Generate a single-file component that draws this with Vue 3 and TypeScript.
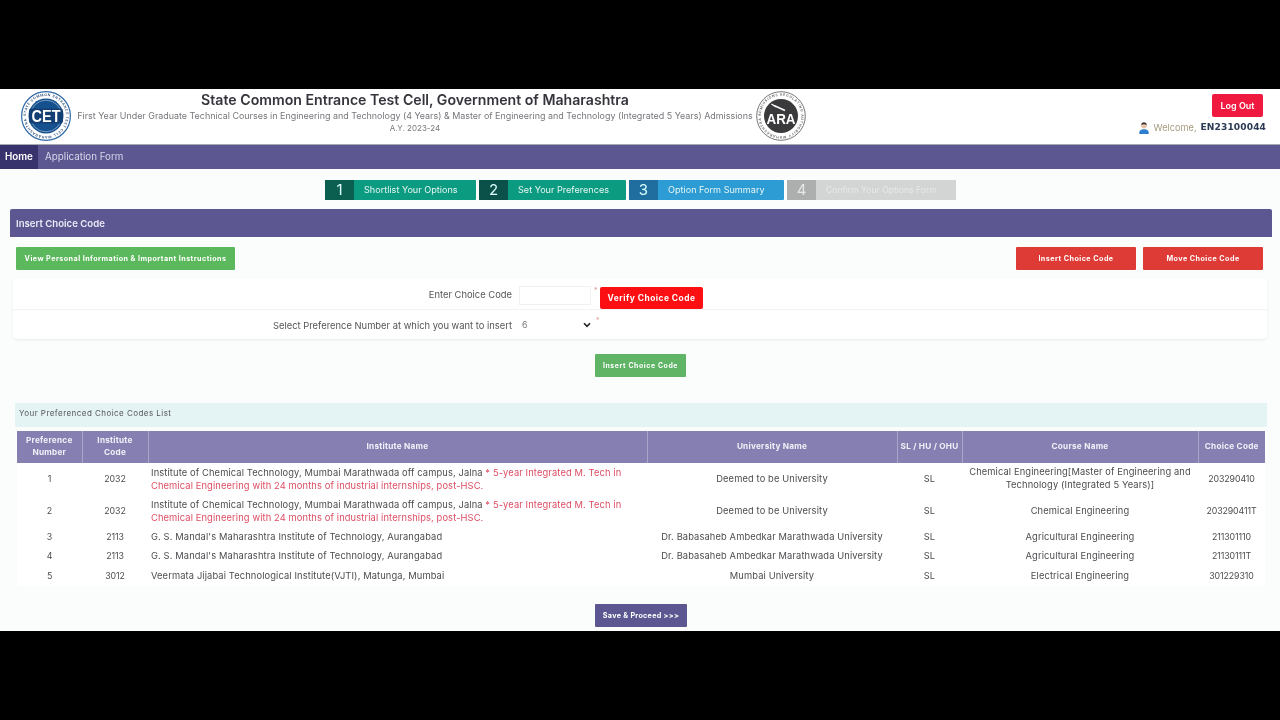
<script setup lang="ts">
interface Step {
  num: number
  label: string
  kind: string
}

interface Row {
  pref: number
  code: number
  institute: string
  note?: string
  university: string
  seat: string
  course: string
  choice: string
}

const steps: Step[] = [
  { num: 1, label: 'Shortlist Your Options', kind: 'green' },
  { num: 2, label: 'Set Your Preferences', kind: 'green two' },
  { num: 3, label: 'Option Form Summary', kind: 'blue' },
  { num: 4, label: 'Confirm Your Options Form', kind: 'grey' }
]

const ict = 'Institute of Chemical Technology, Mumbai Marathwada off campus, Jalna'
const ictNote = '* 5-year Integrated M. Tech  in Chemical Engineering with 24 months of industrial internships, post-HSC.'
const gsm = "G. S. Mandal's Maharashtra Institute of Technology, Aurangabad"
const bamu = 'Dr. Babasaheb Ambedkar Marathwada University'

const rows: Row[] = [
  { pref: 1, code: 2032, institute: ict, note: ictNote, university: 'Deemed to be University', seat: 'SL', course: 'Chemical Engineering[Master of Engineering and Technology (Integrated 5 Years)]', choice: '203290410' },
  { pref: 2, code: 2032, institute: ict, note: ictNote, university: 'Deemed to be University', seat: 'SL', course: 'Chemical Engineering', choice: '203290411T' },
  { pref: 3, code: 2113, institute: gsm, university: bamu, seat: 'SL', course: 'Agricultural Engineering', choice: '211301110' },
  { pref: 4, code: 2113, institute: gsm, university: bamu, seat: 'SL', course: 'Agricultural Engineering', choice: '21130111T' },
  { pref: 5, code: 3012, institute: 'Veermata Jijabai Technological Institute(VJTI), Matunga, Mumbai', university: 'Mumbai University', seat: 'SL', course: 'Electrical Engineering', choice: '301229310' }
]
</script>

<template>
  <div class="page">
    <header class="top">
      <svg class="logo cet" viewBox="0 0 50 50">
        <circle cx="25" cy="25" r="24.4" fill="#fff" stroke="#2f6aa8" stroke-width="1.2" />
        <defs>
          <path id="cetRing" d="M25 25 m-20 0 a20 20 0 1 1 40 0 a20 20 0 1 1 -40 0" />
        </defs>
        <text class="ring" fill="#30507c"><textPath href="#cetRing" textLength="122">STATE COMMON ENTRANCE TEST CELL MAHARASHTRA</textPath></text>
        <circle cx="25" cy="25" r="17.5" fill="#16518f" />
        <circle cx="25" cy="25" r="15.8" fill="none" stroke="#d7e4f0" stroke-width="0.5" />
        <rect x="8" y="17.5" width="34" height="15" rx="3" fill="#123f73" />
        <text x="25" y="31" text-anchor="middle" class="cet-text" textLength="29" lengthAdjust="spacingAndGlyphs">CET</text>
      </svg>
      <div class="title">
        <h1>State Common Entrance Test Cell, Government of Maharashtra</h1>
        <p>First Year Under Graduate Technical Courses in Engineering and Technology (4 Years) &amp; Master of Engineering and Technology (Integrated 5 Years) Admissions</p>
        <p class="ay">A.Y. 2023-24</p>
      </div>
      <svg class="logo ara" viewBox="0 0 50 50">
        <circle cx="25" cy="25" r="24.3" fill="#fff" stroke="#666" stroke-width="0.9" />
        <defs>
          <path id="araRing" d="M25 25 m-20.2 0 a20.2 20.2 0 1 1 40.4 0 a20.2 20.2 0 1 1 -40.4 0" />
        </defs>
        <text class="ring" fill="#666"><textPath href="#araRing" textLength="124">ADMISSIONS REGULATING AUTHORITY MAHARASHTRA</textPath></text>
        <circle cx="25" cy="25" r="17" fill="#3a3a3c" />
        <path d="M15.5 13 L20 16 M18 14.5 L29 19.5" stroke="#fff" stroke-width="1.4" fill="none" />
        <text x="25" y="33" text-anchor="middle" class="ara-text" textLength="29" lengthAdjust="spacingAndGlyphs">ARA</text>
      </svg>
      <div class="user">
        <button class="logout" type="button">Log Out</button>
        <div class="welcome">
          <svg class="avatar" viewBox="0 0 14 15">
            <path d="M1.5 14.5 C1 10.5 3.5 9 7 9 C10.5 9 13 10.5 12.5 14.5 Z" fill="#2f7fd0" />
            <circle cx="7" cy="5" r="3.2" fill="#e8c4a8" />
            <path d="M3.7 4.6 C3.6 1.5 5.5 .8 7 .8 C8.5 .8 10.4 1.5 10.3 4.6 C9.5 3.4 8 3.2 7 3.2 C6 3.2 4.5 3.4 3.7 4.6 Z" fill="#33302e" />
          </svg>
          <span class="hello">Welcome,</span>
          <b>EN23100044</b>
        </div>
      </div>
    </header>

    <nav class="menu">
      <a class="home">Home</a>
      <a>Application Form</a>
    </nav>

    <section class="steps">
      <div v-for="s in steps" :key="s.num" class="step" :class="s.kind">
        <span class="num">{{ s.num }}</span>
        <span class="lbl">{{ s.label }}</span>
      </div>
    </section>

    <main class="panel">
      <h2 class="panel-head">Insert Choice Code</h2>

      <div class="actions">
        <button class="btn success wide" type="button">View Personal Information &amp; Important Instructions</button>
        <div class="right">
          <button class="btn danger" type="button">Insert Choice Code</button>
          <button class="btn danger" type="button">Move Choice Code</button>
        </div>
      </div>

      <div class="form-card">
        <div class="form-row first">
          <label>Enter Choice Code</label>
          <input class="code-input" type="text" />
          <span class="req">*</span>
          <button class="btn verify" type="button">Verify Choice Code</button>
        </div>
        <div class="form-row second">
          <label>Select Preference Number at which you want to insert</label>
          <div class="select-wrap">
            <select class="pref-select">
              <option>6</option>
            </select>
            <svg class="chevron" viewBox="0 0 8 6">
              <path d="M1 1.2 L4 4.4 L7 1.2" fill="none" stroke="#222" stroke-width="1.6" />
            </svg>
          </div>
          <span class="req">*</span>
        </div>
      </div>

      <div class="center">
        <button class="btn success insert" type="button">Insert Choice Code</button>
      </div>

      <div class="list-head">Your Preferenced Choice Codes List</div>

      <table class="codes">
        <colgroup>
          <col class="c65" />
          <col class="c66" />
          <col class="c499" />
          <col class="c250" />
          <col class="c65" />
          <col class="c236" />
          <col class="c67" />
        </colgroup>
        <thead>
          <tr>
            <th>Preference Number</th>
            <th>Institute Code</th>
            <th>Institute Name</th>
            <th>University Name</th>
            <th class="tight">SL / HU / OHU</th>
            <th>Course Name</th>
            <th class="tight">Choice Code</th>
          </tr>
        </thead>
        <tbody>
          <tr v-for="r in rows" :key="r.pref" :class="{ tall: r.note }">
            <td class="num-cell">{{ r.pref }}</td>
            <td class="num-cell">{{ r.code }}</td>
            <td class="left">{{ r.institute }} <span v-if="r.note" class="note">{{ r.note }}</span></td>
            <td>{{ r.university }}</td>
            <td>{{ r.seat }}</td>
            <td>{{ r.course }}</td>
            <td class="num-cell">{{ r.choice }}</td>
          </tr>
        </tbody>
      </table>

      <div class="center save-wrap">
        <button class="btn save" type="button">Save &amp; Proceed &gt;&gt;&gt;</button>
      </div>
    </main>
  </div>
</template>

<style scoped>
.page {
  height: 542px;
  margin-top: 89px;
  background: #fbfcfc;
  font-family: Inter, "Open Sans", sans-serif;
  color: #444;
  overflow: hidden;
  filter: blur(0.4px);
}

.top {
  display: flex;
  align-items: flex-start;
  height: 56px;
  padding: 2px 14px 0 21px;
  background: #fff;
  border-bottom: 1px solid #a9a9b0;
  box-sizing: border-box;
}

.logo {
  width: 50px;
  height: 50px;
  flex: 0 0 auto;
}

.ring {
  font-family: Inter, sans-serif;
  font-size: 3.5px;
  font-weight: 600;
}

.cet-text {
  font-family: "Liberation Sans", sans-serif;
  font-size: 17px;
  font-weight: 700;
  fill: #fff;
}

.ara-text {
  font-family: "Liberation Sans", sans-serif;
  font-size: 15px;
  font-weight: 700;
  fill: #fff;
}

.title {
  width: 676px;
  margin: 0 3px 0 6px;
  text-align: center;
}

.title h1 {
  margin: 1px 0 0;
  font-size: 14.13px;
  line-height: 16px;
  font-weight: 600;
  color: #34343c;
  white-space: nowrap;
}

.title p {
  margin: 0;
  padding-top: 2px;
  font-size: 8.93px;
  line-height: 11px;
  color: #77777c;
  white-space: nowrap;
}

.title .ay {
  padding-top: 2px;
  font-size: 8px;
}

.user {
  margin-left: auto;
  display: flex;
  flex-direction: column;
  align-items: flex-end;
}

.logout {
  width: 51px;
  height: 23px;
  margin: 3px 3px 0 0;
  border: 0;
  border-radius: 2px;
  background: #f0193f;
  color: #fff;
  font: 600 9px Inter, sans-serif;
}

.welcome {
  display: flex;
  align-items: center;
  margin-top: 3px;
  font-size: 10px;
  line-height: 15px;
}

.avatar {
  width: 12px;
  height: 14px;
  margin-right: 4px;
}

.hello {
  color: #a89a80;
  font-size: 9.2px;
}

.welcome b {
  margin-left: 4px;
  color: #2c3a55;
  font-family: "DejaVu Sans", sans-serif;
  font-size: 9.1px;
  letter-spacing: 0.1px;
}

.menu {
  display: flex;
  height: 24px;
  background: #5d5791;
  font-size: 9.8px;
  line-height: 24px;
  color: #d9d7ea;
}

.menu a {
  padding: 0 7px;
}

.menu .home {
  width: 38px;
  padding: 0 0 0 5px;
  box-sizing: border-box;
  background: #38336c;
  color: #fff;
  font-weight: 600;
}

.steps {
  display: flex;
  justify-content: center;
  gap: 3px;
  margin-top: 11px;
  padding-left: 1px;
}

.step {
  display: flex;
  height: 20px;
  border-radius: 1px;
  background: #0b9b80;
  color: #e6f6f2;
  font-size: 9.1px;
  line-height: 20px;
}

.step:nth-child(1) { width: 151px; }
.step:nth-child(2) { width: 147px; }
.step:nth-child(3) { width: 155px; }
.step:nth-child(4) { width: 169px; }

.num {
  width: 29px;
  flex: 0 0 auto;
  background: #0a5f50;
  color: #dff;
  font-size: 15px;
  text-align: center;
}

.lbl {
  flex: 1;
  padding-left: 10px;
  white-space: nowrap;
}

.step.two .num {
  background: #0b5049;
}

.step.blue {
  background: #2d9bd4;
}

.step.blue .num {
  background: #1f6e9f;
}

.step.grey {
  background: #d3d4d4;
  color: #e8e8e8;
  font-size: 8.6px;
}

.step.grey .num {
  background: #adaeae;
  color: #e8e8e8;
}

.panel {
  padding: 9px 8px 0 10px;
}

.panel-head {
  height: 28px;
  margin: 0;
  padding-left: 6px;
  border-radius: 2px 2px 0 0;
  background: #5d5791;
  color: #eceaf6;
  font-size: 9.6px;
  line-height: 29px;
  font-weight: 600;
}

.actions {
  display: flex;
  justify-content: space-between;
  margin-top: 10px;
  padding: 0 9px 0 6px;
}

.right {
  display: flex;
  gap: 7px;
}

.btn {
  height: 23px;
  border: 0;
  border-radius: 1px;
  color: #fff;
  font-family: Inter, sans-serif;
  font-size: 7.2px;
  font-weight: 700;
  letter-spacing: 0.45px;
  padding: 0;
  white-space: nowrap;
}

.success {
  background: #5cb85c;
}

.wide {
  width: 219px;
}

.danger {
  width: 120px;
  background: #de3b36;
}

.form-card {
  margin: 8px 5px 0 3px;
  height: 61px;
  border-radius: 4px;
  background: #fff;
  box-shadow: 0 1px 3px rgba(0, 0, 0, 0.08);
}

.form-row {
  display: flex;
  align-items: flex-start;
  font-size: 9.4px;
  color: #555;
}

.form-row.first {
  height: 32px;
  padding-top: 8px;
  box-sizing: border-box;
  border-bottom: 1px solid #f2f3f3;
}

.form-row.second {
  height: 29px;
  padding-top: 6px;
  box-sizing: border-box;
}

.form-row label {
  width: 499px;
  flex: 0 0 auto;
  text-align: right;
  line-height: 18px;
}

.form-row.second label {
  margin-top: 1px;
}

.code-input {
  width: 72px;
  height: 19px;
  margin-left: 7px;
  padding: 0;
  box-sizing: border-box;
  border: 1px solid #f1f1f1;
  background: #fff;
  outline: none;
}

.req {
  width: 9px;
  color: #d99;
  font-size: 7px;
  line-height: 10px;
  padding-left: 3px;
  box-sizing: border-box;
}

.verify {
  width: 103px;
  height: 22px;
  margin-top: 1px;
  border-radius: 2px;
  background: #fb0f12;
  font-size: 8.4px;
  letter-spacing: 0.48px;
}

.select-wrap {
  position: relative;
  width: 73px;
  height: 17px;
  margin-left: 8px;
}

.pref-select {
  display: block;
  width: 100%;
  height: 100%;
  padding: 0 0 0 2px;
  border: 0;
  appearance: none;
  background: #fff;
  color: #777;
  font: 8.6px Inter, sans-serif;
}

.chevron {
  position: absolute;
  right: 2px;
  top: 6px;
  width: 8px;
  height: 6px;
}

.center {
  display: flex;
  justify-content: center;
}

.insert {
  width: 91px;
  margin-top: 15px;
  margin-right: 1px;
  font-size: 6.9px;
  letter-spacing: 0.6px;
  background: #5fb466;
  line-height: 21px;
}

.list-head {
  height: 24px;
  margin: 26px 5px 0 5px;
  padding-left: 4px;
  background: #e4f3f4;
  color: #56565c;
  font-size: 8px;
  line-height: 21px;
  letter-spacing: 0.45px;
}

.codes {
  width: 1248px;
  margin: 4px 0 0 7px;
  border-collapse: collapse;
  table-layout: fixed;
  background: #fff;
  font-size: 9.3px;
  letter-spacing: 0.13px;
  color: #4c4c50;
}

.c65 { width: 65px; }
.c66 { width: 66px; }
.c67 { width: 67px; }
.c236 { width: 236px; }
.c250 { width: 250px; }
.c499 { width: 499px; }

.codes th {
  height: 32px;
  padding: 0 6px 2px;
  box-sizing: border-box;
  background: #8580b1;
  color: #f1f0f8;
  border-left: 1px solid #a9a6cb;
  font-size: 8.2px;
  line-height: 12px;
  font-weight: 700;
  letter-spacing: 0.25px;
}

.codes th.tight {
  padding: 0 0 2px;
  white-space: nowrap;
}

.codes th:first-child {
  border-left: 0;
  padding: 0 2px 2px;
}

.codes td {
  height: 19.7px;
  padding: 0 3px;
  text-align: center;
  line-height: 12.6px;
}

.codes td.num-cell {
  font-size: 8.8px;
  letter-spacing: -0.1px;
}

.codes .tall td {
  height: 32px;
}

.codes .tall td.left {
  height: 31px;
  padding-top: 1px;
}

.codes td.left {
  text-align: left;
  padding-right: 20px;
}

.note {
  color: #dd4c63;
}

.save-wrap {
  margin-top: 18px;
}

.save {
  width: 92px;
  background: #5d5791;
  letter-spacing: 0.3px;
}
</style>

<style>
html,
body {
  margin: 0;
  background: #000;
}
</style>
